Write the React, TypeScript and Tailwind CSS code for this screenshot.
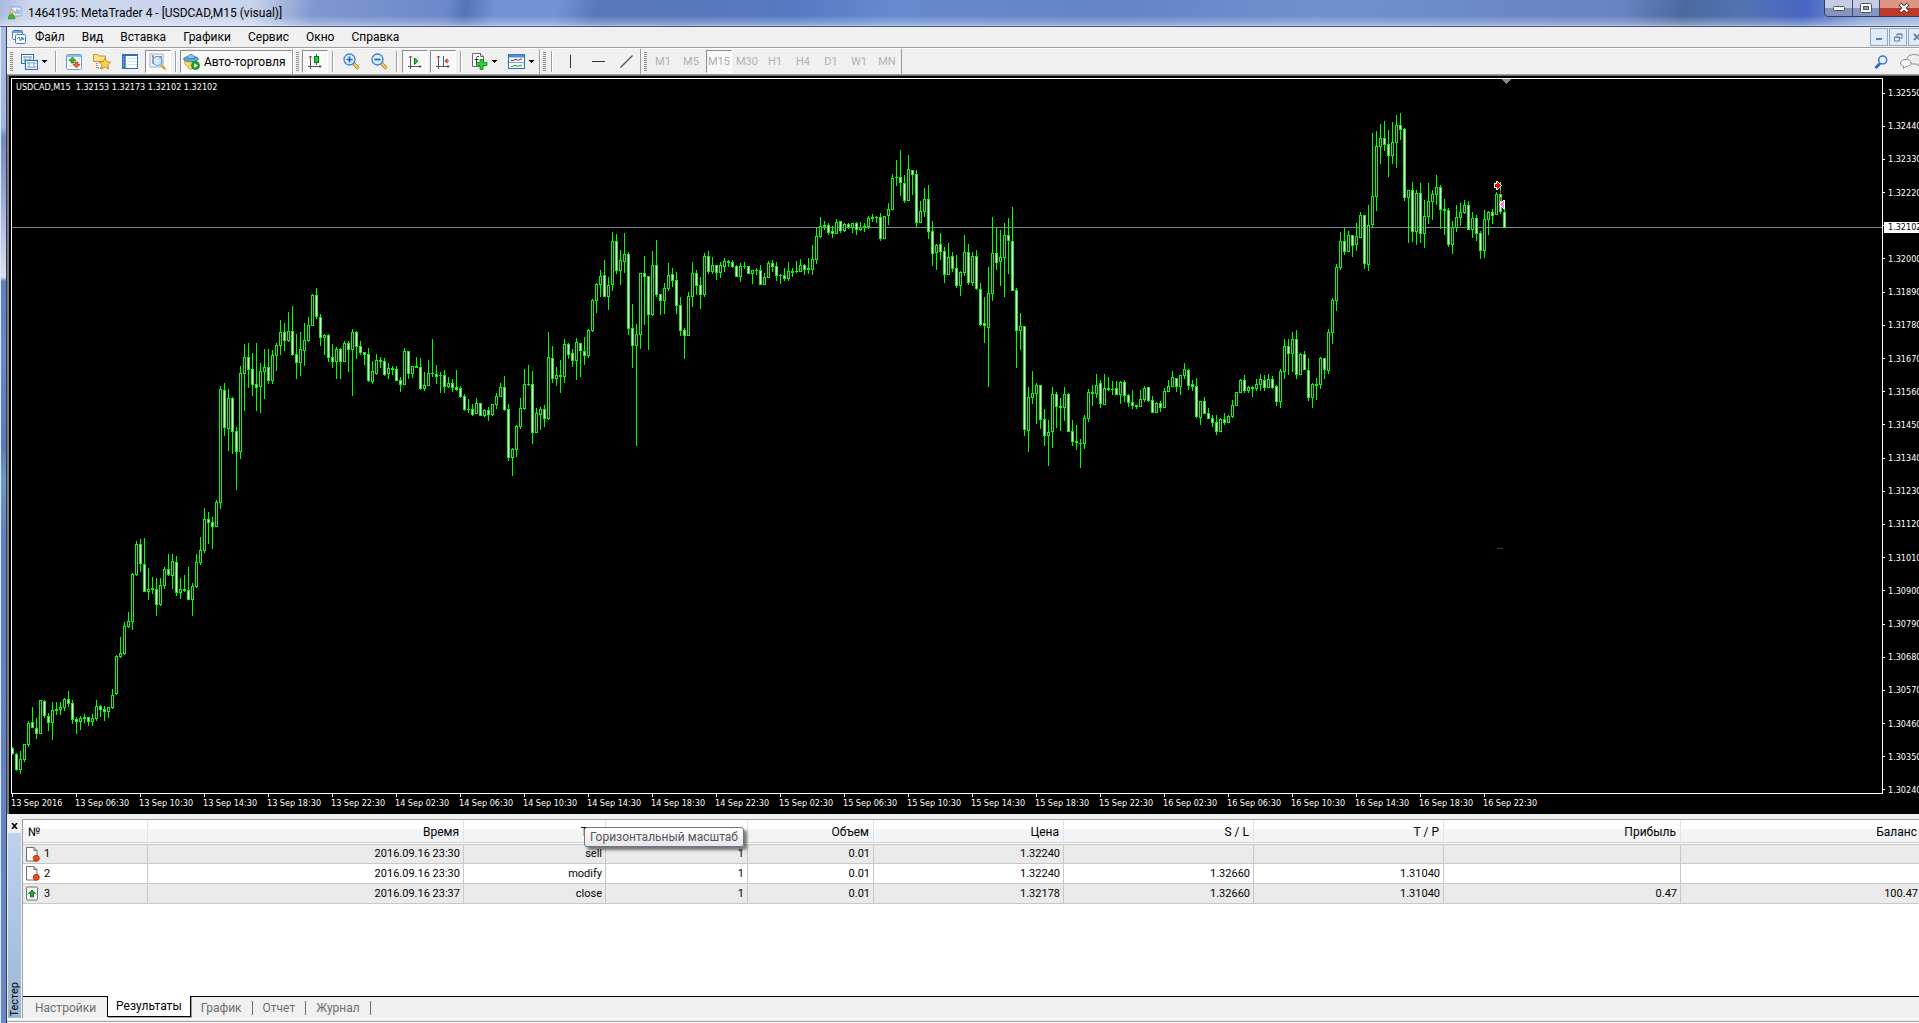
import React, { useState } from "react";
import clsx from "clsx";

// u = bullish (hollow), d = bearish (filled); then high / body top / body bottom / low
const CANDLES = `
d747/748/753/754 d753/754/769/770 u751/759/769/773 u744/744/759/761 u721/723/744/746 d707/722/727/727 d718/728/733/738 u700/700/733/733
d700/701/715/717 d713/716/722/730 u702/710/722/739 d702/709/710/714 u702/707/709/714 u698/699/707/710 d691/699/703/706 d700/703/719/723
d717/719/721/733 u716/718/721/729 d714/717/718/722 d717/717/721/725 u714/718/721/725 u700/706/718/720 d705/706/709/716 d706/709/711/720
u707/707/711/717 u689/695/707/708 u655/656/693/694 u637/653/656/657 u622/626/653/654 u612/621/626/627 u573/574/621/629 u541/544/574/575
d539/544/563/571 d538/564/591/591 u568/589/591/599 d577/588/589/593 d578/589/604/615 u578/585/604/605 u567/569/585/588 d554/569/574/575
u554/561/575/588 d556/562/592/595 u578/589/592/598 d575/589/590/591 d567/590/599/599 u583/586/599/615 u554/562/586/587 u537/550/562/564
u508/519/550/552 d512/519/522/543 d517/522/526/548 u500/502/526/526 u386/389/502/508 d383/390/427/435 u389/398/428/450 d397/398/431/453
d427/431/451/489 u366/373/451/458 u344/357/373/410 d343/357/369/387 d353/369/384/395 d343/384/387/410 u363/371/386/412 u349/367/371/398
d349/367/380/383 u350/355/380/383 u343/345/355/370 u320/332/345/354 d323/332/340/350 u312/331/340/341 d306/331/354/355 d334/354/362/378
u332/349/362/375 u323/340/350/365 u317/325/340/341 u294/295/325/325 d288/295/316/318 d314/317/337/345 u334/335/337/354 d334/335/357/361
d344/357/361/367 u347/349/361/378 d348/349/361/378 u341/343/361/361 d341/343/349/371 u329/332/349/395 d331/332/346/358 d341/346/352/354
d352/352/354/364 d348/354/380/381 u361/371/381/383 u354/360/373/374 d357/360/361/367 d358/361/374/375 u363/368/373/378 d366/368/369/374
d366/369/380/380 d377/380/384/391 u348/351/384/384 d351/351/373/378 u366/366/373/377 d357/366/367/367 d358/367/388/389 u372/385/388/390
u360/373/385/385 d339/373/373/376 d365/374/376/383 d372/375/375/392 d370/375/386/392 u377/383/386/387 d379/383/387/391 d370/387/389/390
d386/388/396/397 d394/396/409/410 d399/409/409/412 d404/409/414/415 u398/403/413/413 d403/403/415/415 u409/410/415/416 d407/410/414/420
u404/404/414/415 u393/396/404/408 u383/387/396/396 d376/387/409/410 d404/409/457/460 u448/449/457/475 u425/426/449/456 u398/408/426/428
u369/384/408/409 d365/384/384/385 d371/384/432/443 u408/413/432/432 u407/409/414/429 d405/409/418/426 u332/357/418/419 d346/358/378/382
u367/375/378/385 d360/375/376/392 u339/344/376/382 d343/344/354/358 d349/353/360/366 u338/342/360/379 d343/343/350/376 d337/351/355/364
u329/330/355/357 u299/300/330/331 u283/284/300/312 u270/276/284/296 d260/275/296/296 u277/285/296/309 u232/241/284/290 d234/241/270/273
u250/260/270/284 u233/254/261/272 d252/254/328/334 d304/328/345/367 u324/334/345/445 u273/273/334/348 d256/273/276/324 d276/276/314/349
u251/265/314/315 d240/265/294/296 d294/294/300/314 u283/288/300/313 u263/275/288/290 d268/274/280/286 d272/280/305/313 d297/305/330/335
d328/330/335/358 u292/296/335/335 u262/273/296/306 d270/273/285/294 d277/285/294/308 u253/256/294/296 d251/256/271/273 u257/265/271/273
d265/265/272/279 u262/265/272/277 u258/261/266/271 d260/261/262/266 d260/262/266/267 d265/266/276/276 u263/266/276/281 d262/266/266/268
d266/266/273/273 u270/270/273/283 d268/270/270/274 d265/270/284/284 u273/277/284/284 u261/263/277/277 d260/263/266/271 d262/266/275/280
d274/275/275/283 d268/275/278/280 u262/271/278/280 d268/271/272/276 d261/271/271/272 u259/265/271/271 d264/265/269/274 d258/268/269/273
u245/259/269/274 u228/236/259/263 u217/226/236/237 d221/225/226/229 d223/225/232/234 d226/231/233/237 u219/222/233/233 d221/221/230/232
u223/224/230/231 d223/224/227/228 u223/223/227/232 d222/223/229/234 u222/227/229/230 d223/226/227/231 u216/218/226/228 d214/217/218/221
d216/217/217/222 d213/217/238/240 u216/216/238/238 u203/209/215/224 u174/178/209/209 d160/177/177/185 d150/177/182/195 d175/183/200/202
u155/169/200/200 d170/170/174/194 d170/174/222/226 u201/211/222/222 u188/199/211/216 d185/199/231/238 d221/231/253/265 u244/245/252/269
d233/244/251/259 d247/251/274/282 u243/257/274/274 d252/256/268/271 d255/268/285/287 u271/272/285/295 u235/252/272/275 d244/252/282/284
u252/256/282/285 d250/256/288/289 d283/289/324/325 d297/323/325/342 u267/293/327/386 u217/253/293/300 d227/253/262/269 u230/257/261/285
u223/235/257/296 d218/235/240/273 d207/241/290/290 d288/290/330/367 u313/326/330/349 d326/326/429/435 u387/397/430/451 u371/393/397/403
u383/385/393/423 d385/385/419/428 d409/419/435/445 u420/432/435/465 u387/394/431/447 d392/394/406/427 d398/406/407/430 u387/394/407/420
d393/394/431/431 d420/431/441/445 d425/441/442/449 d439/443/443/467 u415/418/443/448 u389/392/418/421 d385/392/393/405 u374/385/393/397
d380/383/403/407 u374/388/404/404 d377/388/389/390 d381/389/389/394 d381/388/394/394 u381/382/394/403 d380/382/395/401 d394/395/402/406
d390/402/405/408 d405/405/406/408 u390/399/406/406 u386/388/399/401 d387/387/400/401 d396/400/412/412 u402/403/412/412 d401/403/407/411
u388/391/407/407 u380/386/391/391 u371/377/386/386 d378/378/386/391 u375/375/386/394 u363/369/375/378 d369/370/385/389 d380/384/386/390
d378/386/416/417 u401/401/417/424 d397/401/413/413 d408/413/418/418 d415/418/422/426 d415/422/431/434 u418/419/431/431 d413/419/422/424
u415/416/422/422 u400/405/416/417 u392/392/405/405 u379/380/392/392 d375/380/390/392 u386/387/390/392 d386/387/388/396 u379/384/388/390
u374/379/384/390 d375/380/387/390 u374/379/387/387 d376/379/387/388 d385/386/401/405 u369/371/401/407 u339/346/371/378 d339/346/353/374
u332/339/353/371 d330/339/374/378 u353/354/374/374 d351/354/369/369 d358/370/397/400 u383/384/397/407 d378/384/385/399 u357/358/384/388
d358/358/369/378 u329/332/370/373 u298/300/332/343 u264/267/300/310 u232/241/267/269 d228/241/251/254 u231/235/251/251 d235/235/245/256
u223/236/244/250 u212/215/237/237 d215/215/263/268 u205/225/264/270 u133/196/224/226 u131/146/196/210 u124/138/146/163 d121/138/144/150
d130/144/155/176 u122/142/155/163 u115/125/142/167 d113/125/129/139 d128/129/197/200 u190/190/197/242 d182/190/231/241 u190/193/231/244
d183/193/233/242 u200/216/233/247 u183/201/216/223 u190/194/201/219 u175/187/194/204 d185/187/209/228 d199/209/210/234 d208/210/244/246
u221/227/244/253 u205/217/227/231 u203/212/217/225 u200/205/212/213 d201/205/229/229 u212/218/229/237 d215/218/233/240 d231/233/250/258
u210/219/250/257 u211/212/219/234 d209/212/215/223 u192/194/214/214 d182/194/211/213 d204/212/227/227
`;

const PLOT_LEFT = 12;
const PLOT_TOP = 79;
const STEP = 4;

const candles = CANDLES.trim()
  .split(/\s+/)
  .map((item, i) => {
    const [high, top, bottom, low] = item.slice(1).split("/").map(Number);
    return { x: PLOT_LEFT + i * STEP, up: item[0] === "u", high, top, bottom, low };
  });

const box = (x: number, y1: number, y2: number, w: number) =>
  y2 < y1 ? "" : `M${x} ${y1}h${w}v${y2 - y1 + 1}h${-w}z`;

const outline = candles
  .map((c) => box(c.x, c.high, c.low, 1) + box(c.x - 1, c.top, c.bottom, 3))
  .join("");
const hollow = candles
  .filter((c) => c.up)
  .map((c) => box(c.x, c.top + 1, c.bottom - 1, 1))
  .join("");
const filled = candles
  .filter((c) => !c.up)
  .map((c) => box(c.x, c.top + 1, c.bottom - 1, 1))
  .join("");

const prices = Array.from({ length: 22 }, (_, i) => (1.3255 - i * 0.0011).toFixed(5));

const hours = ["02:30", "06:30", "10:30", "14:30", "18:30", "22:30"];
const times = [13, 14, 15, 16].flatMap((day) =>
  hours.map((h) => (day === 13 && h === "02:30" ? "13 Sep 2016" : `${day} Sep ${h}`))
);

const menu = ["Файл", "Вид", "Вставка", "Графики", "Сервис", "Окно", "Справка"];
const timeframes = ["M1", "M5", "M15", "M30", "H1", "H4", "D1", "W1", "MN"];
const tabs = ["Настройки", "Результаты", "График", "Отчет", "Журнал"];
const columns = ["№", "Время", "Тип", "", "Объем", "Цена", "S / L", "T / P", "Прибыль", "Баланс"];

const rows = [
  { icon: "open", cells: ["1", "2016.09.16 23:30", "sell", "1", "0.01", "1.32240", "", "", "", ""] },
  { icon: "open", cells: ["2", "2016.09.16 23:30", "modify", "1", "0.01", "1.32240", "1.32660", "1.31040", "", ""] },
  { icon: "close", cells: ["3", "2016.09.16 23:37", "close", "1", "0.01", "1.32178", "1.32660", "1.31040", "0.47", "100.47"] },
];

const Grip = () => (
  <span className="mr-[2px] flex h-5 w-[3px] shrink-0 flex-col justify-between">
    {Array.from({ length: 10 }, (_, i) => (
      <span key={i} className="h-px bg-[#8c8c8c]" />
    ))}
  </span>
);

const Separator = () => (
  <span className="mx-[3px] h-[21px] w-[2px] shrink-0 border-r border-white bg-[#a0a0a0]" />
);

const Group = ({ children }: { children: React.ReactNode }) => (
  <div className="flex h-full shrink-0 items-center border-r border-l border-r-[#9a9a9a] border-l-white pl-[2px]">
    <Grip />
    {children}
  </div>
);

const pressedClass =
  "border border-t-[#8c8c8c] border-l-[#8c8c8c] border-r-white border-b-white bg-[#f8f8f8]";

const ToolButton = ({
  label,
  pressed,
  children,
}: {
  label: string;
  pressed?: boolean;
  children: React.ReactNode;
}) => (
  <button
    aria-label={label}
    className={clsx(
      "mx-px flex h-[23px] w-[26px] shrink-0 items-center justify-center",
      pressed && pressedClass
    )}
  >
    {children}
  </button>
);

const DropButton = ({ label, children }: { label: string; children: React.ReactNode }) => (
  <button aria-label={label} className="flex h-[23px] w-[37px] shrink-0 items-center justify-center gap-1">
    {children}
    <svg width="5" height="3" shapeRendering="crispEdges">
      <path d="M0 0h5v1h-1v1h-1v1h-1v-1h-1v-1h-1z" fill="#000" />
    </svg>
  </button>
);

const AppIcon = () => (
  <svg width="14" height="14" viewBox="0 0 14 14">
    <path d="M3 1h10v9H5z" fill="#e8f2fb" stroke="#7fb0dc" />
    <path d="M7 8V5M9 8V3M11 8V4" stroke="#4f8fca" />
    <circle cx="3.500" cy="5.500" r="2" fill="#f4c27a" stroke="#b8803a" strokeWidth=".5" />
    <path d="M0 13c0-3 1.500-5 3.500-5S7 10 7 13z" fill="#4caf3a" stroke="#2f8a24" strokeWidth=".5" />
    <path d="M7 10h5" stroke="#f0b040" />
  </svg>
);

const DocChartIcon = () => (
  <svg width="14" height="14" viewBox="0 0 14 14">
    <rect x=".5" y=".5" width="10" height="9" rx="1" fill="#fff" stroke="#3d7cc9" />
    <path d="M1 2h9" stroke="#6ba2e0" strokeWidth="2" />
    <rect x="3.500" y="4.500" width="10" height="9" rx="1" fill="#fff" stroke="#3d7cc9" />
    <path d="M5 9l2-2 1.500 4L10 7l1 3 1-2" fill="none" stroke="#3d7cc9" />
  </svg>
);

const NewChartIcon = () => (
  <svg width="17" height="16" viewBox="0 0 17 16">
    <rect x=".5" y=".5" width="12" height="9" fill="#f4f9fe" stroke="#2e6da8" />
    <path d="M2 3h9M2 6h9M4 2v7M9 2v7" stroke="#7f9db8" />
    <rect x="4.500" y="6.500" width="12" height="9" fill="#f4f9fe" stroke="#2e78bd" strokeWidth="1.200" />
    <path d="M6 9h9M6 13h9M8 8v6M13 8v6" stroke="#8aa4ba" />
  </svg>
);

const MarketIcon = () => (
  <svg width="16" height="16" viewBox="0 0 16 16">
    <rect x=".5" y=".5" width="15" height="15" rx="1" fill="#fff" stroke="#5f9ed0" />
    <path d="M1 2h14" stroke="#8fc0e8" strokeWidth="2" />
    <path d="M3 6h2M3 12h4M12 5h2M13 10h1" stroke="#b8c8d8" />
    <path d="M6.500 3l3.500 3.500H8V9H5V6.500H3z" fill="#3fb032" stroke="#1d7a16" strokeWidth=".7" />
    <path d="M10.500 14L7 10.500h2V8h3v2.500h2z" fill="#f06a3c" stroke="#b83208" strokeWidth=".7" />
  </svg>
);

const NavigatorIcon = () => (
  <svg width="18" height="17" viewBox="0 0 18 17">
    <path d="M.5 8.500v-7h4l1 1.500h7v5.500z" fill="#fbe08a" stroke="#c89a2a" />
    <path d="M4 10v5h4" fill="none" stroke="#444" strokeDasharray="1 1" />
    <path
      d="M12 5l1.800 3.700 4 .5-3 2.700.8 4.100-3.600-2-3.600 2 .8-4.100-3-2.700 4-.5z"
      fill="#fcd14c"
      stroke="#b07c14"
      strokeWidth=".8"
    />
  </svg>
);

const DataIcon = () => (
  <svg width="16" height="15" viewBox="0 0 16 15">
    <rect x=".5" y=".5" width="15" height="14" fill="#fff" stroke="#2f6fb5" />
    <path d="M0 1h16" stroke="#2f6fb5" strokeWidth="2" />
    <path d="M2.500 2v12" stroke="#5c9bd8" strokeWidth="3" />
    <path d="M2 4h1M2 7h1M2 10h1M2 13h1" stroke="#123" />
    <path d="M6 4.500h9M6 7.500h9M6 10.500h9" stroke="#cfe0f4" />
  </svg>
);

const TesterIcon = () => (
  <svg width="18" height="18" viewBox="0 0 18 18">
    <rect x="1" y="1" width="13" height="13" fill="#eef3f8" stroke="#a9b4c0" />
    <path d="M4 3v8M11 3v9M3 3h2M10 4h3" stroke="#5c6670" />
    <circle cx="8.500" cy="8" r="4.500" fill="#cfe6f8" fillOpacity=".85" stroke="#5b93c4" strokeWidth="1.200" />
    <path d="M12 12l4.500 4.500" stroke="#d9a23a" strokeWidth="2.400" />
  </svg>
);

const ExpertIcon = () => (
  <svg width="17" height="16" viewBox="0 0 17 16">
    <path d="M1.500 6h12c1 4-2 9-6 9.500C4 13 1 10 1.500 6z" fill="#f7d560" stroke="#b28a20" strokeWidth=".7" />
    <ellipse cx="8" cy="5" rx="7.500" ry="2.700" fill="#5fa8d8" stroke="#2c6f9f" strokeWidth=".7" />
    <path d="M4.500 4c0-2 1.500-3.500 3.500-3.500s3.500 1.500 3.500 3.500c-2 1-5 1-7 0z" fill="#8cc8ea" stroke="#2c6f9f" strokeWidth=".7" />
    <circle cx="12.500" cy="11.500" r="4" fill="#20a52a" stroke="#0c7a14" strokeWidth=".7" />
    <path d="M11.300 9.300v4.400l3.500-2.200z" fill="#fff" />
  </svg>
);

const Axes = () => (
  <path d="M3.500 2v13M1 12.500h13M2 3.500l1.500-1.500L5 3.500M12.500 11l1.500 1.500-1.500 1.500" fill="none" stroke="#555" />
);

const CandleIcon = () => (
  <svg width="16" height="16" viewBox="0 0 16 16">
    <Axes />
    <path d="M9.500 0v11" stroke="#0a7d12" />
    <rect x="7.500" y="2.500" width="4" height="6" fill="#2fc43a" stroke="#0a7d12" />
  </svg>
);

const ScrollIcon = () => (
  <svg width="16" height="16" viewBox="0 0 16 16">
    <Axes />
    <path d="M7.500 4v6.500L11 7.200z" fill="#2fc43a" stroke="#0a7d12" />
  </svg>
);

const ShiftIcon = () => (
  <svg width="16" height="16" viewBox="0 0 16 16">
    <Axes />
    <path d="M8.500 2v10" stroke="#1f6fa8" />
    <path d="M10 7h4M12.500 5L10.500 7l2 2" fill="none" stroke="#c03a10" strokeWidth="1.200" />
  </svg>
);

const ZoomIcon = ({ plus }: { plus?: boolean }) => (
  <svg width="17" height="17" viewBox="0 0 17 17">
    <path d="M10 10l5.500 5.500" stroke="#a87a1a" strokeWidth="3.200" />
    <path d="M10 10l5.500 5.500" stroke="#f2cf58" strokeWidth="1.800" />
    <circle cx="6.500" cy="6.500" r="5.500" fill="#d8ecfb" stroke="#3a80c8" strokeWidth="1.300" />
    <path d={plus ? "M3.500 6.500h6M6.500 3.500v6" : "M3.500 6.500h6"} stroke="#2368b4" strokeWidth="1.700" />
  </svg>
);

const IndicatorIcon = () => (
  <svg width="17" height="17" viewBox="0 0 17 17">
    <path d="M1.500.5h8l3 3v10h-11z" fill="#fff" stroke="#6c6c6c" />
    <path d="M9.500.5v3h3" fill="#ddd" stroke="#6c6c6c" />
    <path d="M8 3.500c-2-.5-2.500.5-2.500 2V12M3.500 6.500h4" fill="none" stroke="#333" />
    <path d="M9 6.500h3v3h4v3h-4v4H9v-4H5.500v-3H9z" fill="#2fd43a" stroke="#0a8a14" strokeWidth=".8" />
  </svg>
);

const TemplateIcon = () => (
  <svg width="17" height="15" viewBox="0 0 17 15">
    <rect x=".5" y=".5" width="16" height="14" fill="#f6fbff" stroke="#2f6fb5" />
    <path d="M1 2h15" stroke="#4b8fd4" strokeWidth="3" />
    <path d="M1 8.500h15" stroke="#7aa7d4" />
    <path d="M3 6.500h2l2-1h2l1 1 3-1.500h1" fill="none" stroke="#a02818" />
    <path d="M3 12.500h2l1-1h2l2 1 2-1.500 2 1" fill="none" stroke="#1f9a28" />
  </svg>
);

const RowIcon = ({ type }: { type: string }) =>
  type === "open" ? (
    <svg width="14" height="15" viewBox="0 0 14 15">
      <path d="M.5.500h7.500l3 3v10.500H.5z" fill="#fafafa" stroke="#707070" />
      <path d="M8 .5v3h3" fill="#ccc" stroke="#707070" />
      <circle cx="10.300" cy="11.300" r="3" fill="#f0481c" stroke="#a82400" strokeWidth=".8" />
    </svg>
  ) : (
    <svg width="14" height="15" viewBox="0 0 14 15">
      <rect x=".5" y="1" width="11" height="13" rx="1" fill="#fafafa" stroke="#707070" />
      <path d="M6 4l3.500 3.500h-2V11h-3V7.500h-2z" fill="#1fa82a" stroke="#0a6f12" strokeWidth=".8" />
    </svg>
  );

const TitleBar = () => (
  <header className="flex h-[27px] shrink-0 items-center border-b border-[#46547a] bg-[linear-gradient(to_bottom,transparent_60%,#ffffff55_96%,#ffffffaa),linear-gradient(100deg,#a9b9dd_0,#cdd7ed_30px,#c8d3ec_250px,#8098d0_310px,#6c88c8_440px,#5575b6_460px,#7292d4_490px,#7292d4_550px,#5877b8_590px,#5579c2_780px,#668acf_880px,#6383c6_1100px,#7090cc_1300px,#6883c0_1600px,#4b699f_1660px,#5273b2_1720px,#4666c2_1780px,#8aa2d6_1840px,#a8bbe2_1919px)]">
    <span className="ml-2">
      <AppIcon />
    </span>
    <h1 className="ml-[6px] text-xs whitespace-pre text-black">1464195: MetaTrader 4 - [USDCAD,M15 (visual)]</h1>
    <div className="ml-auto flex h-full shrink-0 items-start">
      <div className="-mr-[10px] flex h-[17px] rounded-bl-[5px] border border-t-0 border-[#2f3d60]">
        <button aria-label="Свернуть" className="flex w-7 items-center justify-center rounded-bl border-r border-[#3c4a70] bg-gradient-to-b from-[#c4cde2] from-50% to-[#8595bd] to-50%">
          <svg width="12" height="5">
            <rect x=".5" y=".5" width="11" height="4" rx="1" fill="#fff" stroke="#4a5468" />
          </svg>
        </button>
        <button aria-label="Развернуть" className="flex w-[27px] items-center justify-center border-r border-[#3c4a70] bg-gradient-to-b from-[#c4cde2] from-50% to-[#8595bd] to-50%">
          <svg width="12" height="10">
            <rect x=".5" y=".5" width="11" height="9" rx="1" fill="#fff" stroke="#4a5468" />
            <rect x="3.500" y="3.500" width="5" height="3" fill="#8a9ac0" stroke="#4a5468" />
          </svg>
        </button>
        <button aria-label="Закрыть" className="flex w-12 items-center justify-center bg-gradient-to-b from-[#dd9584] from-50% to-[#bc3a26] to-50%">
          <svg width="12" height="10" viewBox="0 0 12 10">
            <path d="M2 1l8 8M10 1L2 9" stroke="#4a3438" strokeWidth="4" />
            <path d="M2.500 1.500l7 7M9.500 1.500l-7 7" stroke="#fff" strokeWidth="2.400" />
          </svg>
        </button>
      </div>
    </div>
  </header>
);

const mdiButton =
  "flex h-[18px] w-[18px] items-center justify-center border border-[#93a7bf] bg-[#deebf8]";

const MenuBar = () => (
  <nav className="flex h-[21px] shrink-0 items-center border-b border-[#a0a0a0] bg-[#f0f0f0] pl-[5px]">
    <DocChartIcon />
    <div className="ml-px flex gap-px">
      {menu.map((m) => (
        <button key={m} className="px-2 text-xs text-black">
          {m}
        </button>
      ))}
    </div>
    <div className="-mr-[7px] ml-auto flex gap-px">
      <button aria-label="Свернуть окно" className={mdiButton}>
        <svg width="8" height="8">
          <path d="M1 6h6" stroke="#6b7f96" strokeWidth="2" />
        </svg>
      </button>
      <button aria-label="Восстановить окно" className={mdiButton}>
        <svg width="9" height="9">
          <path d="M3 3V1h5v4H6M3 1.500h5" fill="none" stroke="#6b7f96" />
          <path d="M.5 4h5v4h-5zM.5 4.500h5" fill="none" stroke="#6b7f96" />
        </svg>
      </button>
      <button aria-label="Закрыть окно" className={mdiButton}>
        <svg width="8" height="8">
          <path d="M1 1l6 6M7 1L1 7" stroke="#6b7f96" strokeWidth="1.800" />
        </svg>
      </button>
    </div>
  </nav>
);

const Toolbar = () => {
  const [timeframe, setTimeframe] = useState("M15");

  return (
    <div className="flex h-[27px] shrink-0 items-center border-t border-b border-t-white border-b-[#a0a0a0] bg-[#f0f0f0]">
      <Group>
        <DropButton label="Новый график">
          <NewChartIcon />
        </DropButton>
        <Separator />
        <ToolButton label="Обзор рынка">
          <MarketIcon />
        </ToolButton>
        <ToolButton label="Навигатор">
          <NavigatorIcon />
        </ToolButton>
        <ToolButton label="Окно данных">
          <DataIcon />
        </ToolButton>
        <ToolButton label="Тестер стратегий" pressed>
          <TesterIcon />
        </ToolButton>
        <Separator />
        <button className={clsx("flex h-[23px] w-[112px] shrink-0 items-center gap-1 pl-[2px] text-xs", pressedClass)}>
          <ExpertIcon />
          Авто-торговля
        </button>
      </Group>
      <Group>
        <ToolButton label="Свечи" pressed>
          <CandleIcon />
        </ToolButton>
        <Separator />
        <ToolButton label="Увеличить">
          <ZoomIcon plus />
        </ToolButton>
        <ToolButton label="Уменьшить">
          <ZoomIcon />
        </ToolButton>
        <Separator />
        <ToolButton label="Автопрокрутка" pressed>
          <ScrollIcon />
        </ToolButton>
        <ToolButton label="Сдвиг графика" pressed>
          <ShiftIcon />
        </ToolButton>
        <Separator />
        <DropButton label="Индикаторы">
          <IndicatorIcon />
        </DropButton>
        <DropButton label="Шаблоны">
          <TemplateIcon />
        </DropButton>
      </Group>
      <Group>
        <Separator />
        <ToolButton label="Вертикальная линия">
          <svg width="13" height="13">
            <path d="M6.500 0v13" stroke="#333" />
          </svg>
        </ToolButton>
        <ToolButton label="Горизонтальная линия">
          <svg width="13" height="13">
            <path d="M0 6.500h13" stroke="#333" />
          </svg>
        </ToolButton>
        <ToolButton label="Трендовая линия">
          <svg width="13" height="13">
            <path d="M.5 12.500l12-12" stroke="#555" strokeWidth="1.200" />
          </svg>
        </ToolButton>
      </Group>
      <Group>
        {timeframes.map((t) => (
          <button
            key={t}
            onClick={() => setTimeframe(t)}
            className={clsx(
              "mx-px flex h-[23px] w-[26px] items-center justify-center pt-px text-[11px] text-[#b0b0b0]",
              t === timeframe && pressedClass
            )}
          >
            {t}
          </button>
        ))}
      </Group>
      <div className="-mr-[3px] ml-auto flex items-center gap-3">
        <button aria-label="Поиск">
          <svg width="14" height="14" viewBox="0 0 14 14">
            <path d="M6 8.500L1.500 13" stroke="#2e62c8" strokeWidth="2.600" />
            <circle cx="8.700" cy="5" r="4" fill="#eaf2ff" stroke="#3a70d4" strokeWidth="1.500" />
          </svg>
        </button>
        <button aria-label="Чат">
          <svg width="22" height="15" viewBox="0 0 22 15">
            <path d="M14 .5c4 0 7 2 7 5 0 2-1 3-2 3.500V12l-3-2c-6 .5-9-1.500-9-4.500 0-3 3-5 7-5z" fill="#eee" stroke="#8c8c8c" />
            <path d="M6 5.500c3 0 5 1.500 5 3.500s-2 3.500-5 3.500L3.500 14.500V12C1.500 11.500.5 10.500.5 9c0-2 2.500-3.500 5.500-3.500z" fill="#f8f8f8" stroke="#8c8c8c" />
          </svg>
        </button>
      </div>
    </div>
  );
};

const Chart = () => (
  <section className="flex shrink-0 flex-col border-t border-l-2 border-t-[#696969] border-l-[#7c7c7c] bg-black pt-[2px] pl-[2px] font-['DejaVu_Sans_Condensed','DejaVu_Sans',sans-serif] text-[9px] leading-3 text-white">
    <div className="flex h-[716px]">
      <div className="relative min-w-0 flex-1 border border-white">
        <svg className="block h-full w-full" shapeRendering="crispEdges">
          <g transform={`translate(${-PLOT_LEFT} ${-PLOT_TOP})`}>
            <path d="M0 227h4000v1h-4000z" fill="#778899" />
            <path d={outline} fill="#00ff00" />
            <path d={hollow} fill="#000" />
            <path d={filled} fill="#fff" />
            <path d="M1502 79h9v1h-1v1h-1v1h-1v1h-1v1h-1v-1h-1v-1h-1v-1h-1v-1h-1z" fill="#778899" />
            <path d="M1497 548h6v1h-6z" fill="#006400" />
            {/* sell entry, link to the exit point, exit */}
            <path d="M1500 191h1v3h-1zM1500 197h1v4h-1zM1500 203h1v2h-1z" fill="#ff0000" />
            <path d="M1494 183h2v-2h2v1h1v1h1v1h1v1h1v1h-1v1h-1v1h-1v1h-1v1h-2v-2h-2z" fill="#fff" />
            <path d="M1495 184h2v-2h1v1h1v1h1v1h1v1h-1v1h-1v1h-1v1h-1v-2h-2z" fill="#ff0000" />
            <path d="M1495 186h2v1h-2z" fill="#000" />
            <path d="M1499 204h1v-1h1v-1h1v-1h1v-1h2v9h-2v-1h-1v-1h-1v-1h-1v-1h-1z" fill="#fff" />
            <path d="M1500 204h1v-1h1v-1h1v-1h1v7h-1v-1h-1v-1h-1v-1h-1z" fill="#ee82ee" />
          </g>
        </svg>
        <p className="absolute top-[2px] left-1 whitespace-pre">USDCAD,M15  1.32153 1.32173 1.32102 1.32102</p>
      </div>
      <div className="relative w-9 shrink-0 pt-[9px]">
        <ol className="flex h-[709px] flex-col justify-between">
          {prices.map((p) => (
            <li key={p} className="flex h-3 items-center gap-[3px]">
              <span className="h-px w-[2px] shrink-0 bg-white" />
              {p}
            </li>
          ))}
        </ol>
        <p className="absolute top-36 right-0 left-px h-[11px] bg-white pl-1 leading-[11px] text-black">1.32102</p>
      </div>
    </div>
    <ol className="flex h-5 pl-px">
      {times.map((t) => (
        <li key={t} className="w-16 shrink-0">
          <span className="block h-[3px] w-px bg-white" />
          <span className="-ml-px block whitespace-nowrap">{t}</span>
        </li>
      ))}
    </ol>
  </section>
);

const Tester = () => {
  const [tab, setTab] = useState("Результаты");

  return (
    <section className="flex min-h-0 flex-1 bg-[#f0f0f0] pt-[5px] text-xs text-black">
      <div className="flex w-[15px] shrink-0 flex-col pl-px">
        <button aria-label="Закрыть тестер" className="flex h-[14px] w-[13px] shrink-0 items-center justify-center">
          <svg width="7" height="6">
            <path d="M1 0l5 6M6 0L1 6" stroke="#000" strokeWidth="1.600" />
          </svg>
        </button>
        <div className="flex w-[13px] flex-1 items-end bg-gradient-to-b from-[#bcd3ef] to-[#9cb6d4] pb-[2px]">
          <span className="w-[13px] rotate-180 text-[11px] leading-[13px] [writing-mode:vertical-rl]">Тестер</span>
        </div>
      </div>
      <div className="flex min-w-0 flex-1 flex-col border-t border-l border-[#a0a0a0]">
        <div className="relative flex-1 bg-white">
          <table className="w-full table-fixed border-separate border-spacing-0">
            <colgroup>
              <col className="w-[125px]" />
              <col className="w-[316px]" />
              <col className="w-[142px]" />
              <col className="w-[142px]" />
              <col className="w-[126px]" />
              <col className="w-[190px]" />
              <col className="w-[190px]" />
              <col className="w-[190px]" />
              <col className="w-[237px]" />
              <col />
            </colgroup>
            <thead className="leading-4">
              <tr>
                {columns.map((c, i) => (
                  <th
                    key={i}
                    className="h-[23px] border-r border-b border-r-[#e2e3e5] border-b-[#d5d5d5] bg-gradient-to-b from-white from-40% to-[#f2f4f6] to-40% pt-[2px] pr-1 text-right font-normal first:pl-[5px] first:text-left last:border-r-0 last:pr-[2px]"
                  >
                    {c}
                  </th>
                ))}
              </tr>
            </thead>
            <tbody className="text-[11px] before:block before:h-px">
              {rows.map((row, i) => (
                <tr key={i} className="odd:bg-[#eaeaea]">
                  {row.cells.map((cell, j) => (
                    <td
                      key={j}
                      className={clsx(
                        "h-5 border-r border-b border-[#c8c8c8] pr-[3px] text-right leading-4 last:border-r-0 last:pr-px",
                        i === 0 && "border-t"
                      )}
                    >
                      {j === 0 ? (
                        <span className="flex items-center gap-1 pl-[3px]">
                          <RowIcon type={row.icon} />
                          {cell}
                        </span>
                      ) : (
                        cell
                      )}
                    </td>
                  ))}
                </tr>
              ))}
            </tbody>
          </table>
          <div
            role="tooltip"
            className="absolute top-[7px] left-[561px] h-5 rounded-[3px] border border-[#767676] bg-gradient-to-b from-white to-[#e4e5f0] px-[5px] leading-[18px] whitespace-nowrap text-[#575757] shadow-[3px_3px_3px_#00000080]"
          >
            Горизонтальный масштаб
          </div>
        </div>
        <div className="flex h-[22px] shrink-0 items-start border-t border-black pl-[2px]">
          {tabs.map((t) => (
            <button
              key={t}
              onClick={() => setTab(t)}
              className={clsx(
                "flex h-[21px] items-center",
                t === tab
                  ? "-mt-px border-x border-b border-black bg-white px-2 shadow-[1px_1px_0_#a0a0a0]"
                  : "pl-[10px] text-[#6d6d6d] after:ml-[10px] after:h-[14px] after:w-px after:bg-[#6d6d6d] first:after:bg-transparent"
              )}
            >
              {t}
            </button>
          ))}
        </div>
      </div>
    </section>
  );
};

const App = () => (
  <div className="flex h-screen overflow-hidden font-['Roboto','Noto_Sans',sans-serif]">
    <div className="flex min-w-0 flex-1 flex-col">
      <TitleBar />
      <div className="flex min-h-0 flex-1">
        <div className="w-[7px] shrink-0 border-r border-l border-r-[#333b54] border-l-[#dfe6f4] bg-[linear-gradient(to_bottom,#a9bde6_0,#9db6e6_100px,#6f8cc8_110px,#8fa5d4_160px,#dce4f2_250px,#5f7fc0_254px,#6a88c6_330px,#5b7ab8_420px,#6c9ac4_450px,#5e7fc0_520px,#6a88c6)]" />
        <main className="flex min-w-0 flex-1 flex-col bg-[#f0f0f0]">
          <MenuBar />
          <Toolbar />
          <Chart />
          <Tester />
          <div className="h-[5px] shrink-0 border-t border-b border-white bg-[#f0f0f0]">
            <div className="h-full border-b border-[#a0a0a0]" />
          </div>
        </main>
      </div>
    </div>
  </div>
);

export default App;
